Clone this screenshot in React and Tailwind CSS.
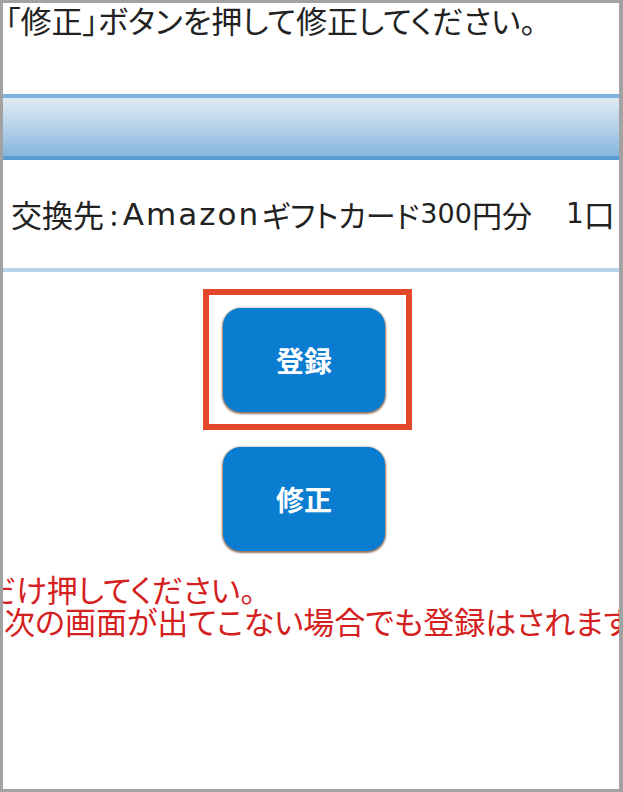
import React from 'react';

const jp = "font-['Noto_Sans_CJK_JP','Noto_Sans',sans-serif]";

function BlueButton({ label }) {
  return (
    <button className="w-[162px] h-[104px] rounded-[18px] bg-[#0a7dd0] text-white text-[28px] font-bold shadow-[0_1px_2px_1px_rgba(110,70,40,0.75)] flex items-center justify-center">
      {label}
    </button>
  );
}

export default function App() {
  return (
    <div className={`w-[623px] h-[792px] bg-white border-t-[3px] border-b-[3px] border-l-[3px] border-r-[4px] border-[#a2a2a2] overflow-hidden ${jp} [font-feature-settings:'palt']`}>
      <p className="pl-[2px] text-[31px] leading-[36px] -mt-[1px] text-[#222] whitespace-nowrap">
        「修正」ボタンを押して修正してください。
      </p>

      {/* table header bar */}
      <div className="mt-[56px] h-[66px] border-t-[4px] border-b-[4px] border-t-[#7fb3de] border-b-[#5a9bd1] bg-gradient-to-b from-[#e0ebf4] via-[#b6d1e8] to-[#86b6de]" />

      <div className="h-[108px] flex items-center pl-[8px] text-[#222] whitespace-nowrap">
        <span className="text-[31px]">交換先</span>
        <span className="text-[28px] ml-[6px] mr-[5px]">:</span>
        <span className="text-[31px] font-['DejaVu_Sans',sans-serif] tracking-[2px]">Amazon</span>
        <span className="text-[30px] ml-[2px]">ギフトカード</span>
        <span className="text-[27px] font-['DejaVu_Sans',sans-serif] ml-[1px]">300</span>
        <span className="text-[30px]">円分</span>
        <span className="text-[28px] ml-[34px] font-['DejaVu_Sans',sans-serif]">1</span>
        <span className="text-[31px]">口</span>
      </div>
      <div className="h-[4px] bg-[#b5d3ea]" />

      <div className="mt-[17px] ml-[200px] w-[209px] h-[141px] border-[6px] border-[#e5472d] pt-[13px] pl-[14px]">
        <BlueButton label="登録" />
      </div>
      <div className="mt-[17px] ml-[220px]">
        <BlueButton label="修正" />
      </div>

      <div className="mt-[22px] text-[#d42020] text-[31px] leading-[32px] whitespace-nowrap">
        <p className="-ml-[18px]">だけ押してください。</p>
        <p className="ml-[1px]">次の画面が出てこない場合でも登録はされます。</p>
      </div>
    </div>
  );
}
